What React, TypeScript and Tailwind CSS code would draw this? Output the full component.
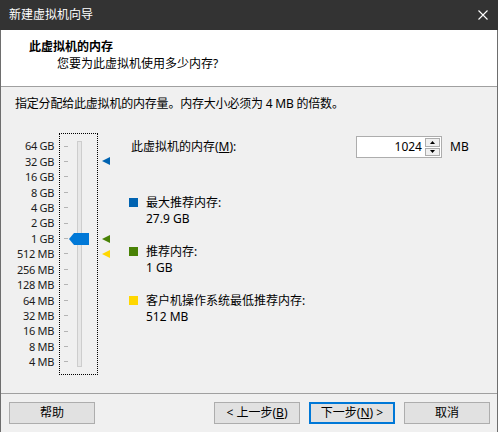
const font = "font-['Noto_Sans','Noto_Sans_CJK_SC',sans-serif]";

const sizes = [
  '64 GB', '32 GB', '16 GB', '8 GB', '4 GB', '2 GB', '1 GB',
  '512 MB', '256 MB', '128 MB', '64 MB', '32 MB', '16 MB', '8 MB', '4 MB',
];

// which row each marker arrow sits on
const markers: Record<number, string> = { 1: '#0063b1', 6: '#498205', 7: '#ffd700' };

const legend = [
  { color: '#0063b1', label: '最大推荐内存:', value: '27.9 GB' },
  { color: '#498205', label: '推荐内存:', value: '1 GB' },
  { color: '#ffd700', label: '客户机操作系统最低推荐内存:', value: '512 MB' },
];

function Arrow({ color }: { color: string }) {
  return (
    <svg width="8" height="8" viewBox="0 0 8 8">
      <polygon points="0,4 8,0 8,8" fill={color} />
    </svg>
  );
}

function Button({ children, primary }: { children: React.ReactNode; primary?: boolean }) {
  return (
    <button
      className={`w-[86px] h-[22px] bg-[#e1e1e1] text-[12px] leading-none flex items-center justify-center ${
        primary ? 'border-2 border-[#0078d7]' : 'border border-[#adadad]'
      }`}
    >
      {children}
    </button>
  );
}

export default function App() {
  return (
    <div className={`w-[498px] h-[432px] flex flex-col bg-[#f0f0f0] text-black text-[12px] overflow-hidden ${font}`}>
      {/* title bar */}
      <div className="h-[30px] shrink-0 bg-[#333333] flex items-center justify-between pl-[9px] pr-[10px] text-white">
        <span className="leading-none">新建虚拟机向导</span>
        <svg width="10" height="10" viewBox="0 0 10 10">
          <path d="M0.5 0.5 L9.5 9.5 M9.5 0.5 L0.5 9.5" stroke="white" strokeWidth="1.1" />
        </svg>
      </div>

      <div className="flex-1 flex flex-col border-x border-[#6e6e6e]">
        {/* header */}
        <div className="h-[57px] shrink-0 bg-white border-b border-[#a0a0a0] pl-[28px] pt-[9px]">
          <div className="font-bold leading-[16px]">此虚拟机的内存</div>
          <div className="pl-[28px] mt-[1px] leading-[16px]">您要为此虚拟机使用多少内存?</div>
        </div>

        {/* body */}
        <div className="flex-1 px-[14px]">
          <p className="mt-[9px] leading-[16px] tracking-[-0.2px]">指定分配给此虚拟机的内存量。内存大小必须为 4 MB 的倍数。</p>

          <div className="flex mt-[21px]">
            {/* size labels */}
            <div className="w-[39px] pt-[5.3px] text-right text-[11px] tracking-[-0.3px] text-[#1a1a1a]">
              {sizes.map((s) => (
                <div key={s} className="h-[15.43px] leading-[15.43px] whitespace-nowrap">{s}</div>
              ))}
            </div>

            {/* slider */}
            <div className="ml-[5px] w-[39px] h-[242px] border border-dotted border-black relative flex">
              <div className="ml-[4px] w-[4px] pt-[4.3px]">
                {sizes.map((s) => (
                  <div key={s} className="h-[15.43px] flex items-center">
                    <div className="w-[4px] h-px bg-[#b4b4b4]" />
                  </div>
                ))}
              </div>
              <div className="ml-[9px] my-[7px] w-[5px] bg-[#e7e7e7] border border-[#cdcdcd]" />
              <svg className="absolute left-[9px] top-[99px]" width="20" height="12" viewBox="0 0 20 12">
                <polygon points="0,6 5,0 20,0 20,12 5,12" fill="#0078d7" />
              </svg>
            </div>

            {/* markers */}
            <div className="ml-[4px] w-[8px] pt-[5.3px]">
              {sizes.map((s, i) => (
                <div key={s} className="h-[15.43px] flex items-center">
                  {markers[i] && <Arrow color={markers[i]} />}
                </div>
              ))}
            </div>

            {/* right panel */}
            <div className="ml-[19px] flex-1">
              <div className="mt-[3px] h-[22px] flex items-center">
                <span className="pl-[2px] w-[227px] leading-none">
                  此虚拟机的内存(<span className="underline">M</span>):
                </span>
                <div className="w-[86px] h-[22px] bg-white border border-[#adadad] flex">
                  <span className="flex-1 text-right pr-[2px] leading-[20px]">1024</span>
                  <div className="w-[17px] flex flex-col gap-px p-px">
                    <div className="flex-1 bg-[#f0f0f0] border border-[#adadad] flex items-center justify-center">
                      <svg width="5" height="3" viewBox="0 0 5 3"><polygon points="2.5,0 5,3 0,3" fill="#000" /></svg>
                    </div>
                    <div className="flex-1 bg-[#f0f0f0] border border-[#adadad] flex items-center justify-center">
                      <svg width="5" height="3" viewBox="0 0 5 3"><polygon points="0,0 5,0 2.5,3" fill="#000" /></svg>
                    </div>
                  </div>
                </div>
                <span className="ml-[8px] leading-none">MB</span>
              </div>

              <div className="mt-[37px] flex flex-col gap-[17px]">
                {legend.map((item) => (
                  <div key={item.label} className="flex">
                    <div className="mt-[3px] w-[9px] h-[9px] shrink-0" style={{ backgroundColor: item.color }} />
                    <div className="ml-[8px] leading-[16px]">
                      <div>{item.label}</div>
                      <div>{item.value}</div>
                    </div>
                  </div>
                ))}
              </div>
            </div>
          </div>
        </div>

        {/* footer */}
        <div className="h-[39px] shrink-0 border-t border-[#a0a0a0] flex items-start pt-[8px] pl-[8px] pr-[7px]">
          <Button>帮助</Button>
          <div className="flex-1" />
          <div className="flex gap-[9px]">
            <Button>&lt; 上一步(<span className="underline">B</span>)</Button>
            <Button primary>下一步(<span className="underline">N</span>) &gt;</Button>
            <Button>取消</Button>
          </div>
        </div>
      </div>
    </div>
  );
}
